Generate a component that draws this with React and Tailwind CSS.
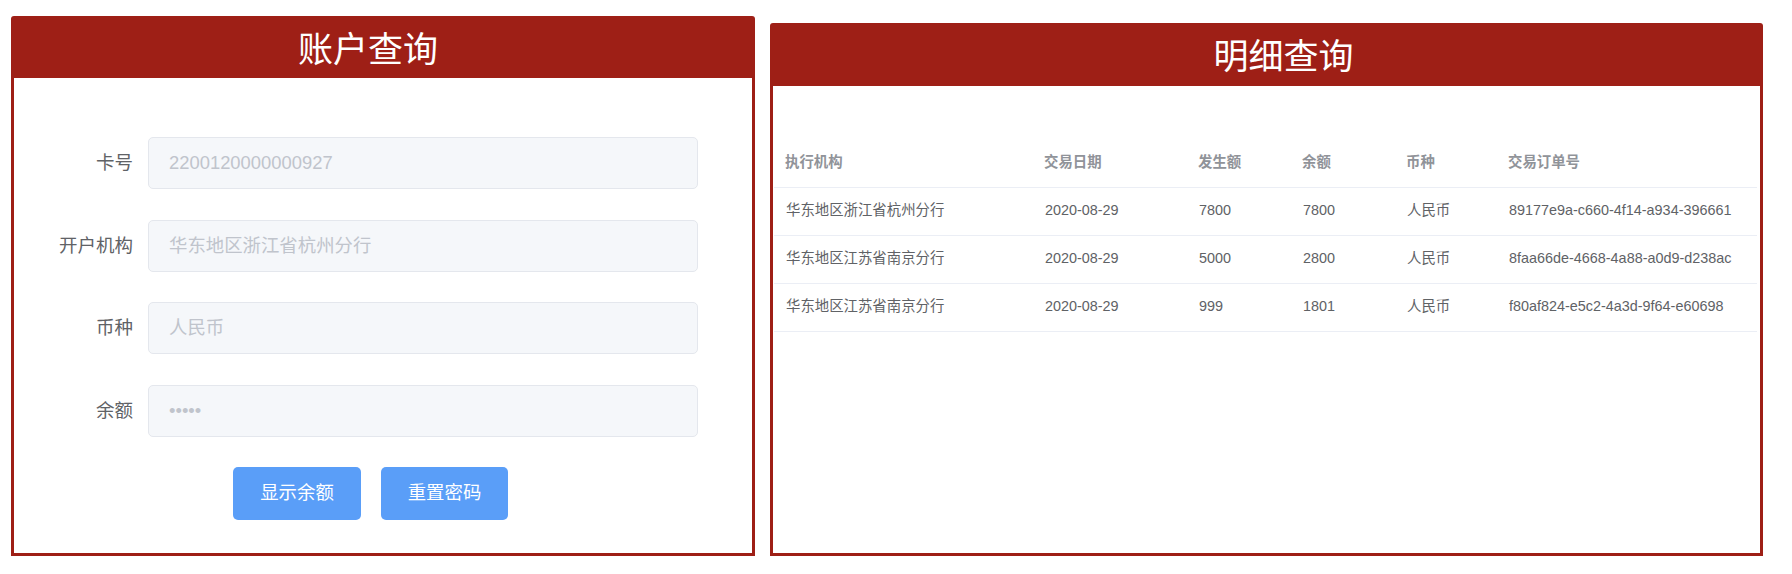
export default function App() {
  const fields = [
    { label: "卡号", value: "2200120000000927" },
    { label: "开户机构", value: "华东地区浙江省杭州分行" },
    { label: "币种", value: "人民币" },
    { label: "余额", value: "•••••" },
  ];
  const cols = [
    { title: "执行机构", w: "w-[259px]" },
    { title: "交易日期", w: "w-[154px]" },
    { title: "发生额", w: "w-[104px]" },
    { title: "余额", w: "w-[104px]" },
    { title: "币种", w: "w-[102px]" },
    { title: "交易订单号", w: "w-[260px]" },
  ];
  const rows = [
    ["华东地区浙江省杭州分行", "2020-08-29", "7800", "7800", "人民币", "89177e9a-c660-4f14-a934-396661"],
    ["华东地区江苏省南京分行", "2020-08-29", "5000", "2800", "人民币", "8faa66de-4668-4a88-a0d9-d238ac"],
    ["华东地区江苏省南京分行", "2020-08-29", "999", "1801", "人民币", "f80af824-e5c2-4a3d-9f64-e60698"],
  ];
  return (
    <div className="w-[1792px] h-[574px] bg-white flex items-start font-['Liberation_Sans','Noto_Sans_CJK_SC',sans-serif]">
      <section className="ml-[11px] mt-[16px] w-[744px] h-[540px] bg-[#9e1f16] rounded-t-[3px] flex flex-col">
        <div className="h-[62px] flex items-center justify-center pr-[30px] text-white text-[35px] font-['Noto_Sans_CJK_SC',sans-serif]">
          账户查询
        </div>
        <div className="flex-1 mx-[3px] mb-[3px] bg-white pt-[59px] flex flex-col">
          <div className="flex flex-col gap-[30.5px]">
            {fields.map((f) => (
              <div key={f.label} className="flex items-center h-[52px]">
                <div className="w-[119px] text-right text-[18.5px] text-[#606266]">{f.label}</div>
                <div className="ml-[15px] w-[550px] h-[52px] rounded-[5px] border border-[#e4e7ed] bg-[#f5f7fa] px-[20px] flex items-center text-[18.4px] text-[#c0c4cc]">
                  {f.value}
                </div>
              </div>
            ))}
          </div>
          <div className="mt-[30px] ml-[219px] flex gap-[20px]">
            <button className="w-[128px] h-[53px] rounded-[5px] bg-[#5a9ef8] text-white text-[18.4px]">显示余额</button>
            <button className="w-[127px] h-[53px] rounded-[5px] bg-[#5a9ef8] text-white text-[18.4px]">重置密码</button>
          </div>
        </div>
      </section>
      <section className="ml-[15px] mt-[23px] w-[993px] h-[533px] bg-[#9e1f16] rounded-t-[3px] flex flex-col">
        <div className="h-[63px] flex items-center justify-center pl-[34px] text-white text-[35px] font-['Noto_Sans_CJK_SC',sans-serif]">
          明细查询
        </div>
        <div className="flex-1 mx-[3px] mb-[3px] bg-white pt-[53px]">
          <table className="ml-[1px] w-[983px] table-fixed border-collapse text-[14.4px]">
            <thead>
              <tr className="h-[48px] border-b border-[#ebeef5]">
                {cols.map((c) => (
                  <th key={c.title} className={`${c.w} pl-[11px] text-left font-bold text-[#909399] align-middle`}>
                    {c.title}
                  </th>
                ))}
              </tr>
            </thead>
            <tbody>
              {rows.map((r, i) => (
                <tr key={i} className="h-[48px] border-b border-[#ebeef5]">
                  {r.map((v, j) => (
                    <td key={j} className="pl-[12px] text-[#606266] whitespace-nowrap overflow-hidden align-middle">
                      {v}
                    </td>
                  ))}
                </tr>
              ))}
            </tbody>
          </table>
        </div>
      </section>
    </div>
  );
}
